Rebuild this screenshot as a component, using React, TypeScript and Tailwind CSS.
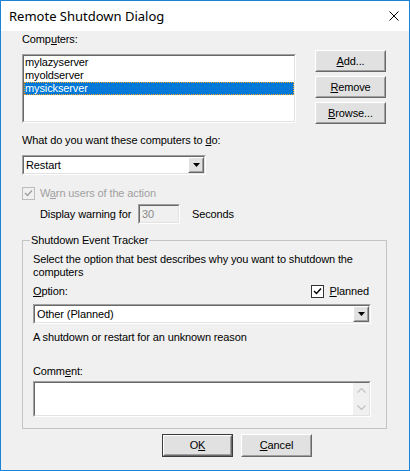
import React from "react";

function Raised({ children, className = "", def = false }: { children?: React.ReactNode; className?: string; def?: boolean }) {
  return (
    <div className={`${className} ${def ? "border border-[#3c3c3c]" : ""}`}>
      <div className="h-full border border-t-white border-l-white border-b-[#696969] border-r-[#696969]">
        <div className="h-full border border-t-[#e3e3e3] border-l-[#e3e3e3] border-b-[#a0a0a0] border-r-[#a0a0a0] bg-[#e1e1e1] flex items-center justify-center">
          {children}
        </div>
      </div>
    </div>
  );
}

function Sunken({ children, className = "", inner = "bg-white" }: { children?: React.ReactNode; className?: string; inner?: string }) {
  return (
    <div className={`${className} border border-t-[#a0a0a0] border-l-[#a0a0a0] border-b-white border-r-white`}>
      <div className={`h-full border border-t-[#696969] border-l-[#696969] border-b-[#e3e3e3] border-r-[#e3e3e3] ${inner}`}>
        {children}
      </div>
    </div>
  );
}

function Tri() {
  return (
    <svg width="7" height="4" viewBox="0 0 7 4">
      <polygon points="0,0 7,0 3.5,4" fill="#000" />
    </svg>
  );
}

function Combo({ text, className = "" }: { text: string; className?: string }) {
  return (
    <Sunken className={className}>
      <div className="flex h-full">
        <div className="flex-1 pl-[2px] flex items-center">{text}</div>
        <Raised className="w-[16px] h-full">
          <Tri />
        </Raised>
      </div>
    </Sunken>
  );
}

function Check({ disabled = false }: { disabled?: boolean }) {
  const c = disabled ? "#a0a0a0" : "#000";
  return (
    <div
      className={`w-[13px] h-[13px] flex items-center justify-center ${
        disabled ? "border border-[#bcbcbc] bg-[#f0f0f0]" : "border border-[#333] bg-white"
      }`}
    >
      <svg width="9" height="9" viewBox="0 0 9 9">
        <polyline points="1,4 3.5,6.5 8,1.5" fill="none" stroke={c} strokeWidth="1.4" />
      </svg>
    </div>
  );
}

export default function App() {
  return (
    <div className="w-[410px] h-[471px] border border-[#1883d7] flex flex-col font-['Liberation_Sans',Arial,sans-serif] text-[11px] leading-[13px] tracking-[-0.12px] text-black">
      <div className="h-[30px] bg-white flex items-center justify-between pl-[8px] pr-[10px] shrink-0">
        <span className="font-['Noto_Sans',sans-serif] text-[13px] leading-[16px] tracking-normal">Remote Shutdown Dialog</span>
        <svg width="10" height="10" viewBox="0 0 10 10">
          <path d="M0.5 0.5 L9.5 9.5 M9.5 0.5 L0.5 9.5" stroke="#000" strokeWidth="1" />
        </svg>
      </div>
      <div className="flex-1 bg-[#f0f0f0] pl-[21px] pt-[2px]">
        <div className="flex">
          <div className="w-[274px]">
            <div className="h-[13px]">
              Comp<u>u</u>ters:
            </div>
            <Sunken className="mt-[8px] h-[69px]">
              <div className="h-[13px] pl-[1px]">mylazyserver</div>
              <div className="h-[13px] pl-[1px]">myoldserver</div>
              <div className="h-[13px] pl-0 bg-[#0078d7] text-white border border-dotted border-[#f5a623] leading-[11px]">mysickserver</div>
            </Sunken>
          </div>
          <div className="ml-[19px] mt-[17px] flex flex-col gap-[4px]">
            <Raised className="w-[71px] h-[22px]">
              <span>
                <u>A</u>dd...
              </span>
            </Raised>
            <Raised className="w-[71px] h-[22px]">
              <span>
                <u>R</u>emove
              </span>
            </Raised>
            <Raised className="w-[71px] h-[22px]">
              <span>
                <u>B</u>rowse...
              </span>
            </Raised>
          </div>
        </div>

        <div className="mt-[10px] h-[13px]">
          What do you want these computers to <u>d</u>o:
        </div>
        <Combo text="Restart" className="mt-[8px] w-[184px] h-[20px]" />

        <div className="mt-[12px] h-[13px] flex items-center">
          <Check disabled />
          <span className="ml-[5px] text-[#a0a0a0]">
            W<u>a</u>rn users of the action
          </span>
        </div>

        <div className="mt-[4px] h-[20px] pl-[18px] flex items-center">
          <span className="w-[98px]">Display warning for</span>
          <Sunken className="w-[42px] h-[20px]" inner="bg-[#f0f0f0]">
            <div className="pl-[2px] h-full flex items-center text-[#8a8a8a]">30</div>
          </Sunken>
          <span className="ml-[12px]">Seconds</span>
        </div>

        <fieldset className="mt-[10px] w-[365px] border border-[#c4c4c4] pl-[10px] pt-[6px] pb-[11px]">
          <legend className="-ml-[3px] px-[1px] h-[13px] leading-[13px]">Shutdown Event Tracker</legend>
          <div className="w-[338px]">
            <div>
              Select the option that best describes why you want to shutdown the
              <br />
              computers
            </div>
            <div className="mt-[6px] h-[13px] flex items-center justify-between">
              <span>
                <u>O</u>ption:
              </span>
              <div className="flex items-center mr-[2px]">
                <Check />
                <span className="ml-[5px]">
                  <u>P</u>lanned
                </span>
              </div>
            </div>
            <Combo text="Other (Planned)" className="mt-[6px] h-[20px]" />
            <div className="mt-[7px]">A shutdown or restart for an unknown reason</div>
            <div className="mt-[21px]">
              Comm<u>e</u>nt:
            </div>
            <Sunken className="mt-[3px] h-[36px]">
              <div className="flex h-full">
                <div className="flex-1" />
                <div className="w-[16px] h-full bg-[#f0f0f0] flex flex-col items-center justify-between py-[5px]">
                  <svg width="9" height="5" viewBox="0 0 9 5">
                    <polyline points="0.5,4.5 4.5,0.5 8.5,4.5" fill="none" stroke="#c2c2c2" strokeWidth="1.2" />
                  </svg>
                  <svg width="9" height="5" viewBox="0 0 9 5">
                    <polyline points="0.5,0.5 4.5,4.5 8.5,0.5" fill="none" stroke="#c2c2c2" strokeWidth="1.2" />
                  </svg>
                </div>
              </div>
            </Sunken>
          </div>
        </fieldset>

        <div className="mt-[5px] ml-[140px] flex gap-[8px]">
          <Raised className="w-[71px] h-[23px]" def>
            <span>
              O<u>K</u>
            </span>
          </Raised>
          <Raised className="w-[71px] h-[23px]">
            <span>
              <u>C</u>ancel
            </span>
          </Raised>
        </div>
      </div>
    </div>
  );
}
